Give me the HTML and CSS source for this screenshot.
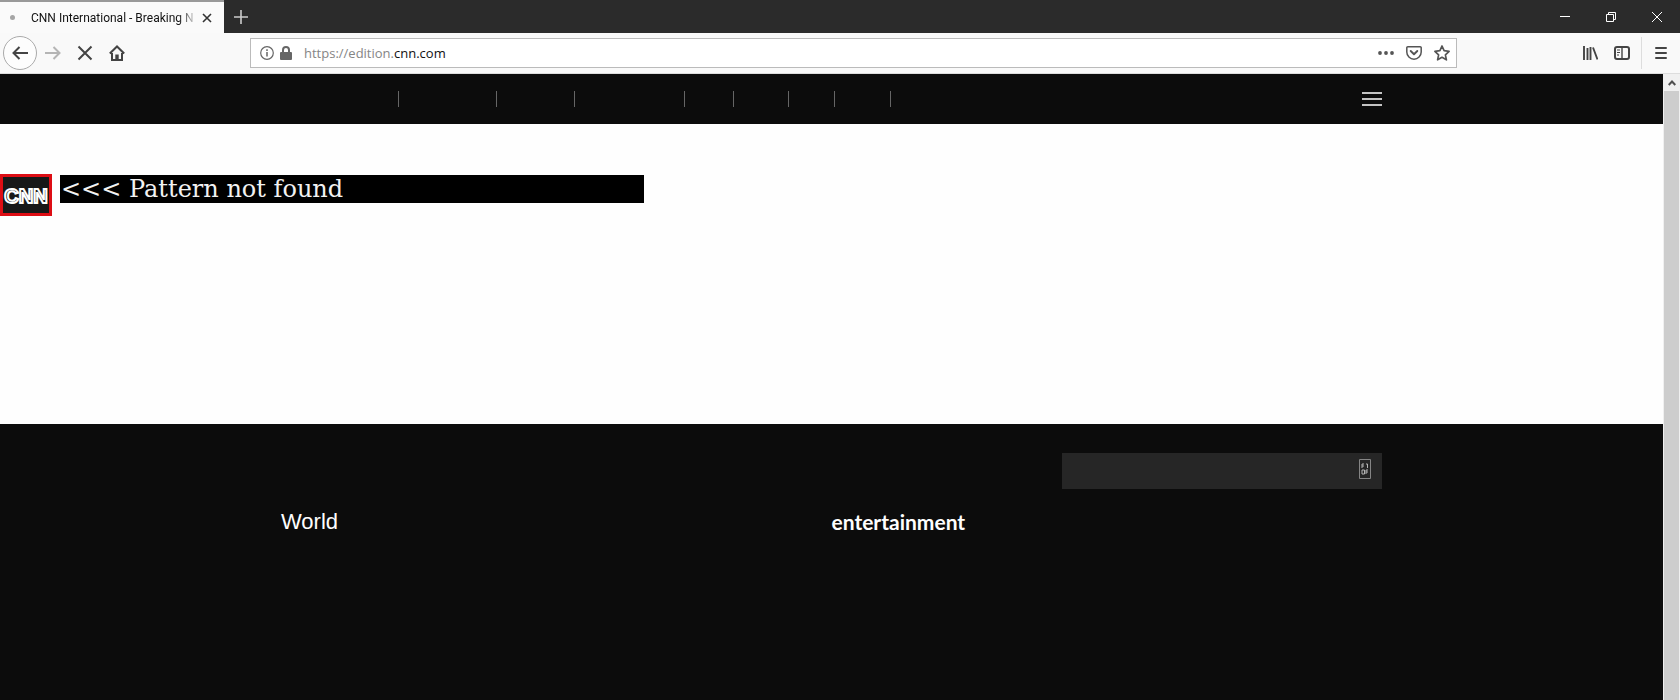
FILE: index.html
```html
<!DOCTYPE html>
<html lang="en">
<head>
<meta charset="utf-8">
<title>CNN International - Breaking News</title>
<link rel="stylesheet" href="styles.css">
</head>
<body>
<header class="titlebar">
  <div class="tab">
    <span class="tab-dot"></span>
    <span class="tab-title">CNN International - Breaking N</span>
    <button class="icon-btn tab-close" aria-label="Close tab"><svg width="10" height="10" viewBox="0 0 10 10"><path d="M1 1l8 8M9 1L1 9" stroke="#333" stroke-width="1.6"/></svg></button>
  </div>
  <button class="icon-btn new-tab" aria-label="New tab"><svg width="14" height="14" viewBox="0 0 14 14"><path d="M7 0v14M0 7h14" stroke="#ccc" stroke-width="1.6"/></svg></button>
  <div class="window-controls">
    <button class="icon-btn win-btn" aria-label="Minimize"><svg width="10" height="10" viewBox="0 0 10 10"><path d="M0 4.5h10" stroke="#fff"/></svg></button>
    <button class="icon-btn win-btn" aria-label="Restore"><svg width="10" height="10" viewBox="0 0 10 10" fill="none" stroke="#fff"><path d="M.5 2.5h7v7h-7zM2.500 2.500V.5h7v7h-2"/></svg></button>
    <button class="icon-btn win-btn" aria-label="Close window"><svg width="10" height="10" viewBox="0 0 10 10"><path d="M0 0l10 10M10 0L0 10" stroke="#fff"/></svg></button>
  </div>
</header>

<div class="toolbar">
  <div class="nav-buttons">
    <button class="icon-btn back" aria-label="Back"><svg width="16" height="14" viewBox="0 0 16 14" fill="none" stroke="#444" stroke-width="2"><path d="M16 7H1.500M7.500 1l-6 6 6 6"/></svg></button>
    <button class="icon-btn tool" aria-label="Forward"><svg width="16" height="14" viewBox="0 0 16 14" fill="none" stroke="#b5b5b5" stroke-width="2"><path d="M0 7h14.500M8.500 1l6 6-6 6"/></svg></button>
    <button class="icon-btn tool" aria-label="Stop"><svg width="16" height="16" viewBox="0 0 16 16" fill="none" stroke="#444" stroke-width="2"><path d="M1.500 1.500l13 13M14.500 1.500l-13 13"/></svg></button>
    <button class="icon-btn tool" aria-label="Home"><svg width="16" height="16" viewBox="0 0 16 16" fill="none" stroke="#444" stroke-width="2"><path d="M.8 8.500L8 1.500l7.200 7M3 8v7h10V8"/><path d="M6.300 15V9.500h3.400V15z" fill="#444" stroke="none"/></svg></button>
  </div>
  <div class="urlbar">
    <svg width="14" height="14" viewBox="0 0 14 14"><circle cx="7" cy="7" r="6.300" fill="none" stroke="#666" stroke-width="1.200"/><path d="M7 6v4.500M7 3.300v1.600" stroke="#666" stroke-width="1.500"/></svg>
    <svg width="12" height="14" viewBox="0 0 12 14"><path d="M3 7V4a3 3 0 0 1 6 0v3" fill="none" stroke="#666" stroke-width="2"/><rect y="6" width="12" height="8" rx="1" fill="#666"/></svg>
    <div class="url"><span class="url-dim">https://edition.</span>cnn.com</div>
    <button class="icon-btn" aria-label="Page actions"><svg width="16" height="4" viewBox="0 0 16 4" fill="#555"><circle cx="2" cy="2" r="1.900"/><circle cx="8" cy="2" r="1.900"/><circle cx="14" cy="2" r="1.900"/></svg></button>
    <button class="icon-btn" aria-label="Save to Pocket"><svg width="16" height="14" viewBox="0 0 16 14" fill="none" stroke="#555" stroke-linecap="round" stroke-linejoin="round"><path d="M1.800.8h12.400a1 1 0 0 1 1 1V6A7.200 7.200 0 0 1 .8 6V1.800a1 1 0 0 1 1-1z" stroke-width="1.500"/><path d="M4.700 5L8 8.200 11.300 5" stroke-width="1.900"/></svg></button>
    <button class="icon-btn" aria-label="Bookmark"><svg width="16" height="16" viewBox="0 0 16 16" fill="none" stroke="#555" stroke-width="1.700" stroke-linejoin="round"><path d="M8 1l2.100 4.700 5 .6-3.700 3.500 1 5L8 12.300l-4.400 2.500 1-5L.9 6.300l5-.6z"/></svg></button>
  </div>
  <div class="tools">
    <button class="icon-btn" aria-label="Library"><svg width="16" height="14" viewBox="0 0 16 14" stroke="#444" stroke-width="1.900"><path d="M2 0v14M5.500 2v12M8.500 1v13M11 1.500L15.500 13.500"/></svg></button>
    <button class="icon-btn" aria-label="Sidebars"><svg width="16" height="14" viewBox="0 0 16 14" fill="none" stroke="#444"><rect x="1" y="1" width="14" height="12" rx="2" stroke-width="2"/><path d="M8 1v12" stroke-width="1.400"/><path d="M3 4h3M3 6.500h3M3 9h2"/></svg></button>
    <button class="icon-btn menu" aria-label="Menu"><svg width="12" height="12" viewBox="0 0 12 12" stroke="#444" stroke-width="2" stroke-linecap="round"><path d="M1 1h10M1 6h10M1 11h10"/></svg></button>
  </div>
</div>

<div class="viewport">
  <div class="page">
    <nav class="site-nav" aria-label="Sections">
      <div class="container nav-row">
        <ul class="sections">
          <li class="w-118"></li><li class="w-98"></li><li class="w-78"></li><li class="w-110"></li><li class="w-49"></li><li class="w-55"></li><li class="w-46"></li><li class="w-56"></li>
        </ul>
        <button class="icon-btn" aria-label="Open sections"><svg width="20" height="14" viewBox="0 0 20 14" stroke="#c4c4c4" stroke-width="2"><path d="M0 1h20M0 7h20M0 13h20"/></svg></button>
      </div>
    </nav>
    <main class="content">
      <div class="match">
        <svg class="logo" viewBox="0 0 46 36" role="img" aria-label="CNN"><text x="23" y="26" text-anchor="middle">CNN</text></svg>
      </div>
      <p class="message">&lt;&lt;&lt; Pattern not found</p>
    </main>
    <footer class="footer">
      <div class="container">
        <form class="search">
          <input class="search-input" type="text" aria-label="Search">
          <button class="icon-btn search-btn" type="button" aria-label="Search"><svg width="12" height="20" viewBox="0 0 12 20" fill="none" stroke="#858585"><path d="M.5.5h11v19H.5z"/><path d="M3 9V5h2M3 7h2M7 5h1.500v4M3 11h2.500v4H3zM7 15v-4h2M7 13h2" stroke="#b5b5b5"/></svg></button>
        </form>
        <div class="columns">
          <a class="heading" href="#">World</a>
          <a class="heading entertainment" href="#">entertainment</a>
        </div>
      </div>
    </footer>
  </div>
  <div class="scrollbar">
    <button class="icon-btn scroll-up" aria-label="Scroll up"><svg width="8" height="6" viewBox="0 0 8 6" fill="none" stroke="#505050" stroke-width="2"><path d="M.7 5L4 1.500 7.300 5"/></svg></button>
    <div class="thumb"></div>
  </div>
</div>
</body>
</html>
```

FILE: styles.css
```css
* { box-sizing: border-box; }
body {
  margin: 0;
  min-height: 100vh;
  display: flex;
  flex-direction: column;
  font-family: "Open Sans", "Noto Sans", sans-serif;
  background: #fefefe;
}
svg { display: block; flex: none; }
.icon-btn {
  display: flex;
  align-items: center;
  justify-content: center;
  flex: none;
  padding: 0;
  border: 0;
  background: none;
}
.titlebar {
  display: flex;
  height: 33px;
  background: #2b2b2b;
}
.tab {
  display: flex;
  align-items: center;
  width: 224px;
  padding: 0 12px 0 10px;
  border-top: 2px solid #999;
  background: #fafafa;
}
.tab-dot {
  width: 5px;
  height: 5px;
  margin-right: 16px;
  border-radius: 50%;
  background: #a5a5a5;
}
.tab-title {
  flex: 1;
  white-space: nowrap;
  font-family: Roboto, sans-serif;
  font-size: 12px;
  color: #111;
  mask-image: linear-gradient(to right, #000 88%, transparent);
}
.tab-close { margin-left: 4px; }
.new-tab { width: 34px; }
.window-controls { display: flex; margin-left: auto; }
.win-btn { width: 46px; }

.toolbar {
  display: flex;
  align-items: center;
  height: 41px;
  background: #f9f9f9;
  border-bottom: 1px solid #ddd;
}
.nav-buttons {
  display: flex;
  align-items: center;
  width: 250px;
  padding-left: 3px;
}
.back {
  width: 34px;
  height: 34px;
  border: 1px solid #aaa;
  border-radius: 50%;
  background: #fdfdfd;
}
.tool { width: 32px; height: 32px; }
.urlbar {
  flex: 1;
  display: flex;
  align-items: center;
  gap: 12px;
  height: 30px;
  padding: 0 6px 0 9px;
  border: 1px solid #bbb;
  background: #fff;
}
.urlbar svg + svg { margin-left: -6px; }
.url { flex: 1; font-size: 13px; color: #111; }
.url-dim { color: #858585; }
.tools {
  display: flex;
  align-items: center;
  justify-content: flex-end;
  gap: 16px;
  width: 223px;
}
.menu {
  width: 39px;
  height: 32px;
  margin-left: -5px;
  border-left: 1px solid #ddd;
}

.viewport { flex: 1; display: flex; }
.page { flex: 1; display: flex; flex-direction: column; }
.container {
  width: 100%;
  max-width: 1101px;
  margin: 0 auto;
}
.site-nav { display: flex; height: 50px; background: #0c0c0c; }
.nav-row { display: flex; align-items: center; justify-content: space-between; }
.sections { display: flex; margin: 0; padding: 0; list-style: none; }
.sections li { height: 16px; border-right: 1px solid #666; }
.w-118 { width: 118px; }
.w-98 { width: 98px; }
.w-78 { width: 78px; }
.w-110 { width: 110px; }
.w-49 { width: 49px; }
.w-55 { width: 55px; }
.w-46 { width: 46px; }
.w-56 { width: 56px; }

.content {
  display: flex;
  align-items: flex-start;
  gap: 8px;
  height: 300px;
  padding-top: 50px;
}
.match { border: 3px solid #dd0d14; background: #181818; }
.logo { width: 46px; height: 36px; }
.logo text {
  font-family: "Liberation Sans", Arial, sans-serif;
  font-size: 20px;
  font-weight: 700;
  fill: #181818;
  stroke: #fff;
  stroke-width: 2px;
}
.message {
  width: 584px;
  margin: 1px 0 0;
  padding-left: 1px;
  background: #000;
  color: #f2f2f2;
  font-family: "DejaVu Serif", serif;
  font-size: 24px;
  line-height: 28px;
}
.footer { flex: 1; padding-top: 29px; background: #0c0c0c; }
.search {
  display: flex;
  width: 320px;
  height: 36px;
  margin-left: auto;
  padding-right: 11px;
  background: #262626;
}
.search-input {
  flex: 1;
  border: 0;
  background: none;
  color: #fff;
}
.search-btn { padding-bottom: 4px; }
.columns {
  display: grid;
  grid-template-columns: 1fr 1fr;
  margin-top: 18px;
}
.heading {
  font-family: "Liberation Sans", Arial, sans-serif;
  font-size: 22px;
  line-height: 30px;
  color: #fefefe;
  text-decoration: none;
}
.entertainment { font-family: Lato, sans-serif; font-size: 21px; font-weight: 700; }

.scrollbar {
  display: flex;
  flex-direction: column;
  width: 17px;
  padding: 0 1px;
  background: #f0f0f0;
}
.scroll-up { height: 17px; }
.thumb { flex: 1; background: #cdcdcd; }
```
